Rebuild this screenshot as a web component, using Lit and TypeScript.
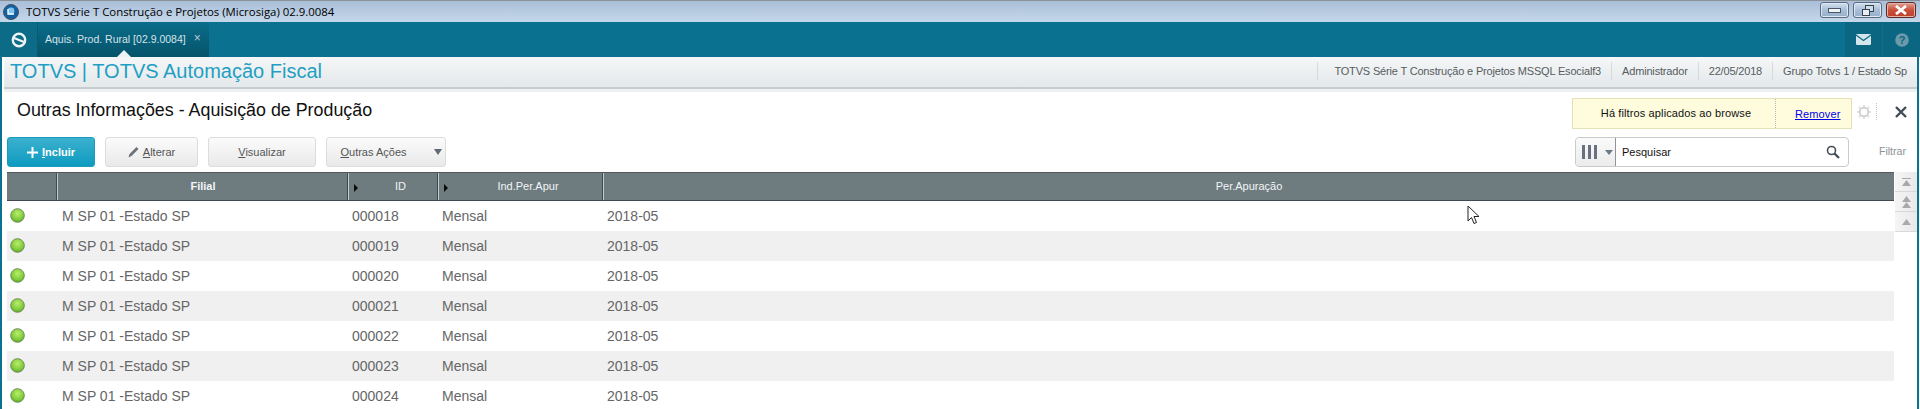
import { LitElement, html, css } from "lit";
import { customElement } from "lit/decorators.js";

const ROWS = ["000018", "000019", "000020", "000021", "000022", "000023", "000024"];

@customElement("app-root")
export class AppRoot extends LitElement {
  static styles = css`
    :host { display: block; width: 1920px; height: 409px; overflow: hidden; position: relative; font-family: "Liberation Sans", Arial, sans-serif; background: #fff; }
    .titlebar { height: 22px; box-sizing: border-box; border-top: 1px solid #8a9098; background: linear-gradient(#a9bfd8, #c5d7ea); display: flex; align-items: center; color: #000; }
    .titlebar .appicon { margin-left: 3px; width: 16px; height: 16px; flex: none; }
    .titlebar .ttl { margin-left: 7px; font-family: "Open Sans", "Noto Sans", sans-serif; font-size: 11.4px; white-space: nowrap; }
    .winbtns { margin-left: auto; display: flex; gap: 4px; margin-right: 4px; align-self: flex-start; margin-top: 1px; }
    .wb { width: 29px; height: 16px; box-sizing: border-box; border: 1px solid #5a6a80; border-radius: 3px; display: flex; align-items: center; justify-content: center; background: linear-gradient(#d3e0ee, #a9bed6 50%, #97afca); box-shadow: inset 0 0 0 1px #dfe9f3; }
    .wb.x { width: 30px; background: linear-gradient(#e0a394, #c9503a 50%, #bd3f2b); border-color: #5d2a2a; box-shadow: inset 0 0 0 1px #e5b0a5; }
    .tabsbar { height: 35px; background: #0a7190; display: flex; align-items: stretch; }
    .home { width: 38px; flex: none; display: flex; align-items: center; justify-content: center; background: #0c6b86; border-right: 1px solid #0a5a72; box-sizing: border-box; padding-top: 1px; }
    .tab { width: 171px; flex: none; box-sizing: border-box; background: linear-gradient(#0a6d8a, #06536a); color: #d5e4ea; font-size: 10.5px; display: flex; align-items: center; padding-left: 7px; padding-bottom: 1px; position: relative; white-space: nowrap; }
    .tab .close { margin-left: 8px; color: #b6ccd5; font-size: 12px; position: relative; top: -1px; }
    .tab::after { content: ""; position: absolute; left: 79px; bottom: 0; border: 7px solid transparent; border-top: 0; border-bottom-color: #eef1f3; }
    .tr { margin-left: auto; display: flex; }
    .tr .ic { width: 37px; margin-left: 1px; box-sizing: border-box; display: flex; align-items: center; justify-content: center; background: #0b6681; }
    .frame { border-left: 2px solid #0a7190; border-right: 2px solid #0a7190; padding-left: 1px; margin-right: 1px; height: 352px; box-sizing: border-box; overflow: hidden; }
    .head { height: 32px; box-sizing: border-box; margin-left: 1px; background: linear-gradient(#f4f6f7, #e5e9eb); border-bottom: 2px solid #c5cdd0; display: flex; align-items: center; padding-left: 6px; padding-bottom: 2px; }
    .brand { color: #1e9fc3; font-size: 20px; line-height: 1; white-space: nowrap; }
    .meta { margin-left: auto; display: flex; align-items: center; height: 20px; font-size: 11px; letter-spacing: -0.17px; color: #565c60; }
    .meta span { padding: 3px 10px; border-left: 1px solid #d5dadc; white-space: nowrap; }
    .meta span:first-child { padding-left: 16px; }
    .band { height: 3px; background: #eef0f1; margin-left: 1px; }
    .sub { display: flex; height: 45px; box-sizing: border-box; padding-left: 14px; padding-top: 5px; }
    .sub h1 { margin: 0; font-weight: normal; font-size: 17.85px; color: #111; line-height: 26px; flex: none; }
    .subr { margin-left: auto; display: flex; align-items: flex-start; margin-top: -5px; }
    .filt { width: 280px; height: 31px; box-sizing: border-box; margin-top: 6px; background: #fefcdd; border: 1px solid #e2e2b4; display: flex; align-items: center; font-size: 11px; color: #111; letter-spacing: 0.12px; }
    .filt .a { width: 203px; height: 100%; box-sizing: border-box; text-align: center; line-height: 28px; border-right: 1px dotted #b5b8ba; padding-left: 4px; }
    .filt a { margin-left: 19px; color: #0000ee; text-decoration: underline; }
    .gear { margin: 13px 0 0 5px; width: 14px; height: 14px; }
    .vsep { width: 1px; height: 17px; margin: 11px 0 0 5px; border-left: 1px dotted #c5c8ca; }
    .cl { margin: 13px 9px 0 16px; width: 14px; height: 14px; }
    .tool { height: 35px; display: flex; align-items: flex-start; padding-left: 4px; box-sizing: border-box; }
    .btn { height: 30px; box-sizing: border-box; border: 1px solid #dadcdd; border-radius: 3px; background: linear-gradient(#fbfbfb, #e9e9e9); color: #555; font-size: 11px; display: flex; align-items: center; justify-content: center; margin-right: 10px; }
    .btn u { text-decoration: underline; }
    .btn.primary { width: 88px; background: linear-gradient(#3cb0cf, #0d9bbf); border: 1px solid #1b9cbd; color: #fff; font-weight: bold; gap: 4px; }
    .btn.alt { width: 93px; gap: 4px; }
    .btn.vis { width: 108px; }
    .btn.out { width: 120px; position: relative; padding-right: 25px; }
    .btn.out i { position: absolute; right: 3px; top: 11px; border: 4px solid transparent; border-top: 6px solid #5e6a75; border-bottom: 0; }
    .search { margin-left: auto; display: flex; align-items: flex-start; height: 30px; }
    .sbox { width: 274px; height: 30px; box-sizing: border-box; border: 1px solid #c8cacc; border-radius: 4px; display: flex; align-items: center; font-size: 11px; color: #111; background: #fff; }
    .cols { width: 40px; height: 28px; box-sizing: border-box; border-right: 1px solid #8f9499; display: flex; align-items: center; gap: 3px; padding-left: 6px; background: linear-gradient(#fafafa, #ececec); border-radius: 4px 0 0 4px; }
    .cols b { width: 3px; height: 14px; background: #6a7080; display: block; }
    .cols i { margin-left: 5px; border: 4px solid transparent; border-top: 5px solid #6a7a88; border-bottom: 0; }
    .sbox .ph { margin-left: 6px; flex: 1; }
    .sbox svg { margin-right: 8px; }
    .flt { width: 68px; text-align: right; padding: 8px 11px 0 0; box-sizing: border-box; font-size: 10.6px; color: #8b9196; }
    .tablewrap { display: flex; padding-left: 4px; }
    .table { flex: 1; min-width: 0; }
    .hdr { height: 29px; box-sizing: border-box; display: grid; grid-template-columns: 51px 291px 90px 165px 1fr; background: #6e7c80; border-top: 1px solid #55585c; border-bottom: 1px solid #404a50; color: #f2f4f5; font-size: 11px; }
    .hdr div { display: flex; align-items: center; justify-content: center; position: relative; border-right: 1px solid #c5cbcd; box-shadow: inset -1px 0 0 #3f4a4f; font-weight: 700; padding-bottom: 1px; box-sizing: border-box; }
    .hdr div:last-child { border: none; box-shadow: none; }
    .hdr .thin { font-weight: normal; }
    .hdr .mk { padding-left: 14px; }
    .hdr i { position: absolute; left: 5px; top: 11px; border: 4px solid transparent; border-left: 4px solid #0a0a0a; border-right: 0; }
    .row { height: 30px; display: grid; grid-template-columns: 51px 291px 90px 165px 1fr; align-items: center; color: #666; font-size: 14px; padding-bottom: 1px; box-sizing: border-box; }
    .row:nth-child(even) { background: #f0f0f0; }
    .row .t { padding-left: 3px; white-space: nowrap; }
    .row .t:nth-child(2) { padding-left: 4px; }
    .row .ind { display: flex; padding-left: 3px; }
    .scroll { width: 22px; flex: none; display: flex; flex-direction: column; margin-left: 1px; height: 60px; }
    .scroll div { height: 20px; box-sizing: border-box; border-bottom: 1px solid #d8d8d8; display: flex; align-items: center; justify-content: center; background: linear-gradient(90deg, #f5f5f5, #e9e9e9); }
    .cursor { position: absolute; left: 1467px; top: 205px; width: 14px; height: 20px; }
  `;

  private dot() {
    return html`<svg width="15" height="15" viewBox="0 0 15 15">
      <defs><radialGradient id="g" cx="50%" cy="35%" r="65%"><stop offset="0" stop-color="#b9ec6b"/><stop offset="0.7" stop-color="#7fcb3b"/><stop offset="1" stop-color="#5ea52b"/></radialGradient></defs>
      <circle cx="7.5" cy="7.5" r="6.8" fill="url(#g)" stroke="#6d8f58" stroke-width="1"/>
    </svg>`;
  }

  render() {
    return html`
      <div class="titlebar">
        <svg class="appicon" viewBox="0 0 16 16"><circle cx="8" cy="8" r="7.5" fill="#16609f"/><circle cx="8" cy="8" r="7.5" fill="none" stroke="#3f4f66"/><circle cx="8" cy="7" r="3.4" fill="#7fc4ee"/><path d="M5 5v5h6" fill="none" stroke="#fff" stroke-width="1.3"/></svg>
        <span class="ttl">TOTVS Série T Construção e Projetos (Microsiga) 02.9.0084</span>
        <div class="winbtns">
          <div class="wb"><svg width="13" height="5"><rect x="0.5" y="0.5" width="12" height="4" fill="#eef3f8" stroke="#4a5666"/></svg></div>
          <div class="wb"><svg width="12" height="11" viewBox="0 0 12 11"><rect x="3.5" y="0.5" width="8" height="6" fill="#cfdcea" stroke="#38434f"/><rect x="0.5" y="4.5" width="7" height="6" fill="#e8eef5" stroke="#38434f"/></svg></div>
          <div class="wb x"><svg width="14" height="10" viewBox="0 0 14 10"><path d="M2 1l10 8M12 1L2 9" stroke="#fff" stroke-width="2.8"/></svg></div>
        </div>
      </div>
      <div class="tabsbar">
        <div class="home"><svg width="16" height="16" viewBox="0 0 16 16"><circle cx="8" cy="8" r="6.2" fill="none" stroke="#eef5f7" stroke-width="2.4"/><path d="M3 6l10 4" stroke="#eef5f7" stroke-width="2.2"/></svg></div>
        <div class="tab"><span class="lbl">Aquis. Prod. Rural [02.9.0084]</span><span class="close">×</span></div>
        <div class="tr">
          <div class="ic"><svg width="15" height="11" viewBox="0 0 15 11"><rect width="15" height="11" rx="1" fill="#d3e6ec"/><path d="M0 1l7.5 5.5L15 1" fill="none" stroke="#0b6681" stroke-width="1.2"/></svg></div>
          <div class="ic"><svg width="14" height="14" viewBox="0 0 14 14"><circle cx="7" cy="7" r="6.8" fill="#6a9aab"/><text x="7" y="11" text-anchor="middle" font-size="11" font-weight="bold" font-family="Liberation Sans" fill="#0b6681">?</text></svg></div>
        </div>
      </div>
      <div class="frame">
        <div class="head">
          <div class="brand">TOTVS | TOTVS Automação Fiscal</div>
          <div class="meta">
            <span>TOTVS Série T Construção e Projetos MSSQL Esocialf3</span>
            <span>Administrador</span>
            <span>22/05/2018</span>
            <span>Grupo Totvs 1 / Estado Sp</span>
          </div>
        </div>
        <div class="band"></div>
        <div class="sub">
          <h1>Outras Informações - Aquisição de Produção</h1>
          <div class="subr">
            <div class="filt"><div class="a">Há filtros aplicados ao browse</div><a>Remover</a></div>
            <svg class="gear" viewBox="0 0 14 14"><circle cx="7" cy="7" r="4.2" fill="none" stroke="#d2d4d6" stroke-width="2"/><path d="M7 0v3M7 11v3M0 7h3M11 7h3M2 2l2 2M10 10l2 2M2 12l2-2M10 4l2-2" stroke="#d2d4d6" stroke-width="1.6"/></svg>
            <div class="vsep"></div>
            <svg class="cl" viewBox="0 0 14 14"><path d="M2 2l10 10M12 2L2 12" stroke="#414c57" stroke-width="2.4"/></svg>
          </div>
        </div>
        <div class="tool">
          <div class="btn primary"><svg width="11" height="11" viewBox="0 0 11 11"><path d="M5.5 0v11M0 5.5h11" stroke="#fff" stroke-width="2"/></svg><span><u>I</u>ncluir</span></div>
          <div class="btn alt"><svg width="11" height="12" viewBox="0 0 11 12"><path d="M0.5 11.5l1-3.5L8.5 1l2 2L3.5 10z" fill="#6c7278"/></svg><span><u>A</u>lterar</span></div>
          <div class="btn vis"><span><u>V</u>isualizar</span></div>
          <div class="btn out"><span><u>O</u>utras Ações</span><i></i></div>
          <div class="search">
            <div class="sbox">
              <div class="cols"><b></b><b></b><b></b><i></i></div>
              <div class="ph">Pesquisar</div>
              <svg width="14" height="14" viewBox="0 0 14 14"><circle cx="5.5" cy="5.5" r="4" fill="none" stroke="#444e58" stroke-width="1.6"/><path d="M8.6 8.6L13 13" stroke="#444e58" stroke-width="2.2"/></svg>
            </div>
            <div class="flt">Filtrar</div>
          </div>
        </div>
        <div class="tablewrap">
          <div class="table">
            <div class="hdr">
              <div></div>
              <div>Filial</div>
              <div class="thin mk"><i></i>ID</div>
              <div class="thin mk"><i></i>Ind.Per.Apur</div>
              <div class="thin">Per.Apuração</div>
            </div>
            <div class="rows">
              ${ROWS.map((id) => html`<div class="row">
                <div class="ind">${this.dot()}</div>
                <div class="t">M SP 01 -Estado SP</div>
                <div class="t">${id}</div>
                <div class="t">Mensal</div>
                <div class="t">2018-05</div>
              </div>`)}
            </div>
          </div>
          <div class="scroll">
            <div><svg width="9" height="8" viewBox="0 0 9 8"><path d="M0 0h9v1H0z" fill="#a9a9a9"/><path d="M4.5 2L9 8H0z" fill="#a9a9a9"/></svg></div>
            <div><svg width="9" height="12" viewBox="0 0 9 12"><path d="M4.5 0L9 6H0zM4.5 6L9 12H0z" fill="#a9a9a9"/></svg></div>
            <div><svg width="9" height="6" viewBox="0 0 9 6"><path d="M4.5 0L9 6H0z" fill="#a9a9a9"/></svg></div>
          </div>
        </div>
      </div>
      <svg class="cursor" viewBox="0 0 14 20"><path d="M1 1v15l3.5-3.5 2.5 6 2.5-1-2.5-6H12z" fill="#fff" stroke="#222" stroke-width="1"/></svg>
    `;
  }
}
